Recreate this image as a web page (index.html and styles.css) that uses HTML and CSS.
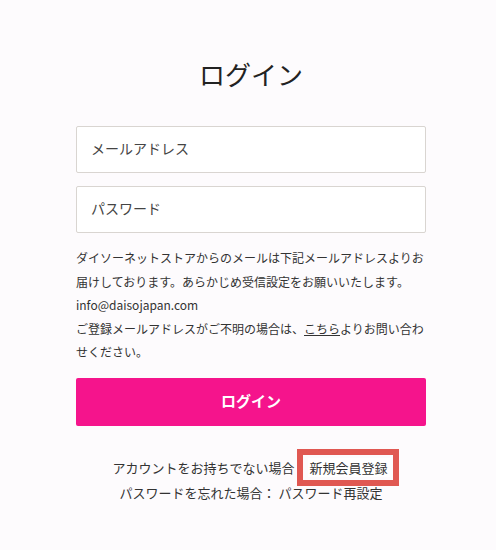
FILE: index.html
```html
<!DOCTYPE html>
<html lang="ja">
<head>
<meta charset="utf-8">
<title>ログイン</title>
<link rel="stylesheet" href="styles.css">
</head>
<body>
<main class="login">
  <h1 class="login-title">ログイン</h1>
  <form class="login-form">
    <input class="field" type="email" placeholder="メールアドレス">
    <input class="field" type="password" placeholder="パスワード">
    <p class="notice">ダイソーネットストアからのメールは下記メールアドレスよりお届けしております。あらかじめ受信設定をお願いいたします。<br>info@daisojapan.com<br>ご登録メールアドレスがご不明の場合は、<a class="link" href="#">こちら</a>よりお問い合わせください。</p>
    <button class="submit" type="button">ログイン</button>
  </form>
  <div class="links">
    <p class="links-row">アカウントをお持ちでない場合：<span class="highlight">新規会員登録</span></p>
    <p class="links-row">パスワードを忘れた場合：&nbsp;パスワード再設定</p>
  </div>
</main>
</body>
</html>
```
FILE: styles.css
```css
* { box-sizing: border-box; }
html, body {
  margin: 0;
  padding: 0;
  background: #fdfbfd;
}
body {
  font-family: "Noto Sans CJK JP", "Noto Sans", sans-serif;
  color: #333;
  padding-left: 6px;
}
.login {
  width: 350px;
  margin: 0 auto;
  display: flex;
  flex-direction: column;
}
.login-title {
  margin: 0;
  padding-top: 55px;
  font-size: 26px;
  line-height: 38px;
  font-weight: 400;
  text-align: center;
  color: #222;
}
.login-form {
  margin-top: 33px;
  display: flex;
  flex-direction: column;
}
.field {
  width: 350px;
  height: 47px;
  margin: 0 0 13px;
  padding: 0 14px 3px;
  border: 1px solid #d9d5d1;
  border-radius: 2px;
  background: #fff;
  font-family: inherit;
  font-size: 14px;
  color: #333;
  outline: none;
}
.field::placeholder { color: #444; }
.notice {
  margin: 0;
  font-size: 12px;
  line-height: 23.5px;
  color: #333;
}
.link {
  color: #333;
  text-decoration: underline;
}
.submit {
  margin-top: 14px;
  height: 48px;
  border: none;
  border-radius: 2px;
  background: #f5148c;
  color: #fff;
  font-family: inherit;
  font-size: 15px;
  font-weight: 700;
  padding-bottom: 3px;
}
.links {
  margin-top: 29px;
  display: flex;
  flex-direction: column;
  align-items: center;
}
.links-row {
  margin: 0;
  font-size: 13px;
  line-height: 25px;
  color: #333;
  white-space: nowrap;
}
.highlight {
  position: relative;
  background: #fff;
  padding: 0 2px;
}
.highlight::after {
  content: "";
  position: absolute;
  left: -11px;
  right: -9px;
  top: -9px;
  bottom: -9px;
  border: 6px solid #e05852;
}
```
